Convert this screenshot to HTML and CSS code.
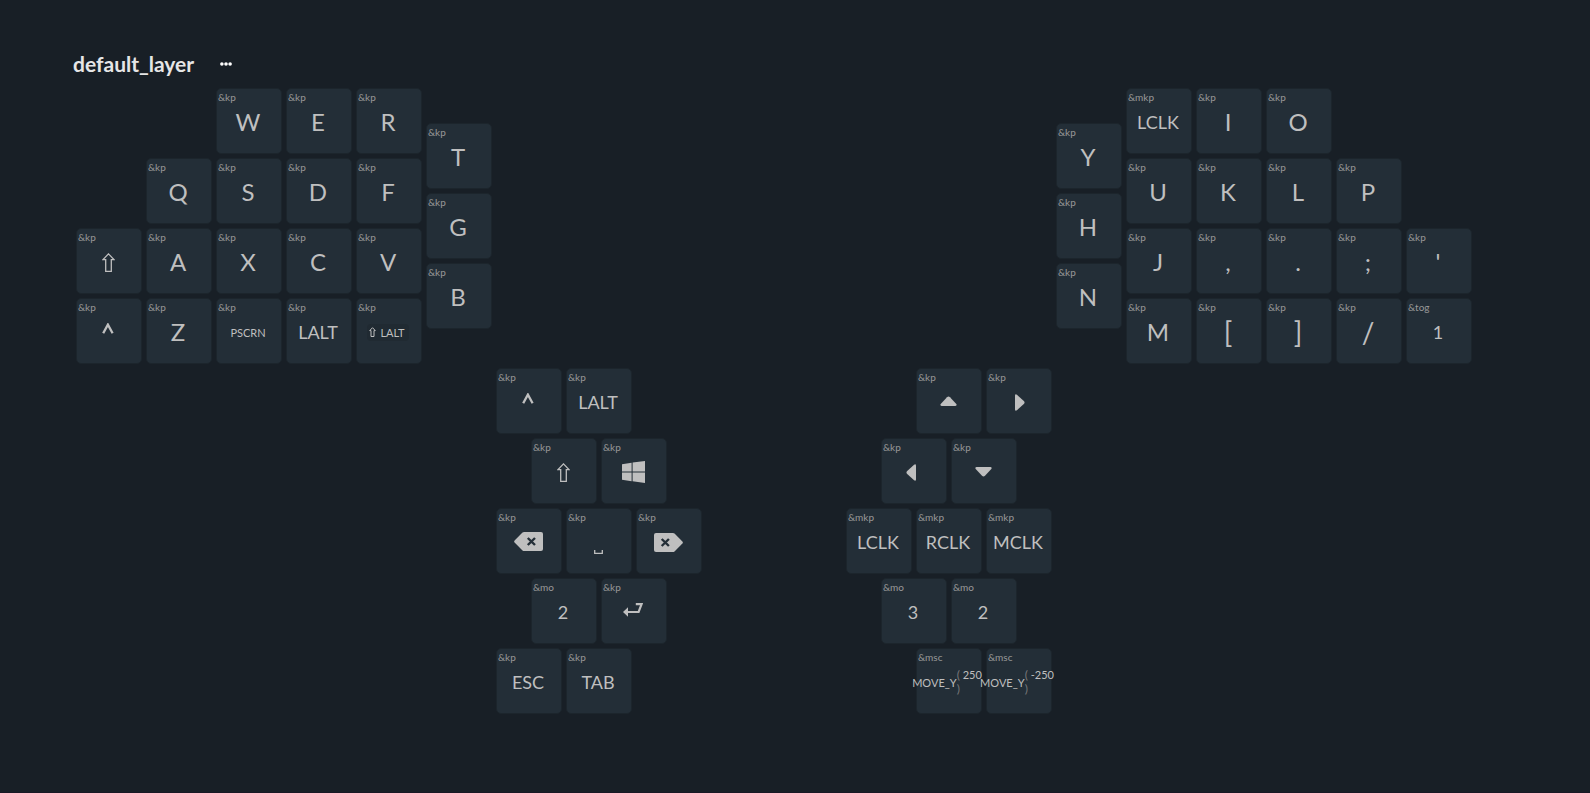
FILE: index.html
```
<!DOCTYPE html>
<html lang="en">
<head>
<meta charset="utf-8">
<title>Keymap</title>
<link rel="stylesheet" href="styles.css">
</head>
<body>
<svg class="defs" aria-hidden="true">
  <symbol id="shift" viewBox="0 0 13 19"><path d="M6.5 .9 12 6.6H9.3V18.3H3.7V6.6H1Z" fill="none" stroke="currentColor" stroke-width="1.300"/></symbol>
  <symbol id="ctrl" viewBox="0 0 12 11"><path d="M1.200 10.200 5.900 1.600 10.600 10.200" fill="none" stroke="currentColor" stroke-width="2.300"/></symbol>
</svg>
<main class="editor">
  <header class="layer">
    <button class="layer-name">default_layer</button>
    <button class="layer-menu" aria-label="Layer options">
      <svg width="12" height="4" viewBox="0 0 12 4" fill="currentColor"><circle cx="1.900" cy="2" r="1.800"/><circle cx="6" cy="2" r="1.800"/><circle cx="10.100" cy="2" r="1.800"/></svg>
    </button>
  </header>
  <section class="keyboard" aria-label="Keys">
    <button class="key x4 y0"><span class="bind">&amp;kp</span>W</button>
    <button class="key x6 y0"><span class="bind">&amp;kp</span>E</button>
    <button class="key x8 y0"><span class="bind">&amp;kp</span>R</button>
    <button class="key x10 y1"><span class="bind">&amp;kp</span>T</button>
    <button class="key x28 y1"><span class="bind">&amp;kp</span>Y</button>
    <button class="key x30 y0 word"><span class="bind">&amp;mkp</span>LCLK</button>
    <button class="key x32 y0"><span class="bind">&amp;kp</span>I</button>
    <button class="key x34 y0"><span class="bind">&amp;kp</span>O</button>

    <button class="key x2 y2"><span class="bind">&amp;kp</span>Q</button>
    <button class="key x4 y2"><span class="bind">&amp;kp</span>S</button>
    <button class="key x6 y2"><span class="bind">&amp;kp</span>D</button>
    <button class="key x8 y2"><span class="bind">&amp;kp</span>F</button>
    <button class="key x10 y3"><span class="bind">&amp;kp</span>G</button>
    <button class="key x28 y3"><span class="bind">&amp;kp</span>H</button>
    <button class="key x30 y2"><span class="bind">&amp;kp</span>U</button>
    <button class="key x32 y2"><span class="bind">&amp;kp</span>K</button>
    <button class="key x34 y2"><span class="bind">&amp;kp</span>L</button>
    <button class="key x36 y2"><span class="bind">&amp;kp</span>P</button>

    <button class="key x0 y4" aria-label="Shift"><span class="bind">&amp;kp</span><svg width="13" height="19"><use href="#shift"/></svg></button>
    <button class="key x2 y4"><span class="bind">&amp;kp</span>A</button>
    <button class="key x4 y4"><span class="bind">&amp;kp</span>X</button>
    <button class="key x6 y4"><span class="bind">&amp;kp</span>C</button>
    <button class="key x8 y4"><span class="bind">&amp;kp</span>V</button>
    <button class="key x10 y5"><span class="bind">&amp;kp</span>B</button>
    <button class="key x28 y5"><span class="bind">&amp;kp</span>N</button>
    <button class="key x30 y4"><span class="bind">&amp;kp</span>J</button>
    <button class="key x32 y4"><span class="bind">&amp;kp</span>,</button>
    <button class="key x34 y4"><span class="bind">&amp;kp</span>.</button>
    <button class="key x36 y4"><span class="bind">&amp;kp</span>;</button>
    <button class="key x38 y4"><span class="bind">&amp;kp</span>'</button>

    <button class="key x0 y6 raised" aria-label="Control"><span class="bind">&amp;kp</span><svg width="12" height="11"><use href="#ctrl"/></svg></button>
    <button class="key x2 y6"><span class="bind">&amp;kp</span>Z</button>
    <button class="key x4 y6 small"><span class="bind">&amp;kp</span>PSCRN</button>
    <button class="key x6 y6 word"><span class="bind">&amp;kp</span>LALT</button>
    <button class="key x8 y6 small"><span class="bind">&amp;kp</span><span class="combo"><svg width="7" height="10" viewBox="0 0 7 10"><path d="M3.500.700 6.300 3.600H5V9.500H2V3.600H.700Z" fill="none" stroke="currentColor"/></svg>LALT</span></button>
    <button class="key x30 y6"><span class="bind">&amp;kp</span>M</button>
    <button class="key x32 y6 tall"><span class="bind">&amp;kp</span>[</button>
    <button class="key x34 y6 tall"><span class="bind">&amp;kp</span>]</button>
    <button class="key x36 y6 tall"><span class="bind">&amp;kp</span>/</button>
    <button class="key x38 y6 word"><span class="bind">&amp;tog</span>1</button>

    <button class="key x12 y8 raised" aria-label="Control"><span class="bind">&amp;kp</span><svg width="12" height="11"><use href="#ctrl"/></svg></button>
    <button class="key x14 y8 word"><span class="bind">&amp;kp</span>LALT</button>
    <button class="key x24 y8" aria-label="Up"><span class="bind">&amp;kp</span><svg width="17" height="12" viewBox="0 0 17 12"><path d="M1.600 10Q-.3 9.800.7 8.100L7 1.200Q8.500-.3 10 1.200L16.300 8.100Q17.300 9.800 15.400 10Z" fill="currentColor"/></svg></button>
    <button class="key x26 y8" aria-label="Right"><span class="bind">&amp;kp</span><svg width="14" height="17" viewBox="-4 0 14 17"><path d="M0 1.600Q.2-.3 1.900.7L8.800 7Q10.300 8.500 8.800 10L1.900 16.300Q.2 17.300 0 15.400Z" fill="currentColor"/></svg></button>

    <button class="key x13 y10" aria-label="Shift"><span class="bind">&amp;kp</span><svg width="13" height="19"><use href="#shift"/></svg></button>
    <button class="key x15 y10" aria-label="Windows"><span class="bind">&amp;kp</span><svg width="23" height="22" viewBox="0 0 23 22"><path d="M0 3.200 9.600 1.800V10.500H0ZM10.600 1.600 23 0V10.500H10.600ZM0 11.500H9.600V20.200L0 18.800ZM10.600 11.500H23V22L10.600 20.300Z" fill="currentColor"/></svg></button>
    <button class="key x23 y10" aria-label="Left"><span class="bind">&amp;kp</span><svg width="14" height="17" viewBox="0 0 14 17"><path d="M10 1.600Q9.800-.3 8.100.7L1.200 7Q-.3 8.500 1.200 10L8.100 16.300Q9.800 17.300 10 15.400Z" fill="currentColor"/></svg></button>
    <button class="key x25 y10" aria-label="Down"><span class="bind">&amp;kp</span><svg width="17" height="10" viewBox="0 0 17 10"><path d="M1.600 0Q-.3.2.7 1.900L7 8.800Q8.500 10.300 10 8.800L16.300 1.900Q17.300.2 15.400 0Z" fill="currentColor"/></svg></button>

    <button class="key x12 y12" aria-label="Backspace"><span class="bind">&amp;kp</span><svg width="29" height="21" viewBox="0 0 29 21"><path d="M8.500.6Q9.200 0 10 0H27Q29 0 29 2V17Q29 19 27 19H10Q9.200 19 8.500 18.400L.6 10.500Q-.3 9.500.6 8.500Z" fill="currentColor"/><path d="M13.800 6 21 13M21 6 13.800 13" class="cut"/></svg></button>
    <button class="key x14 y12 low" aria-label="Space"><span class="bind">&amp;kp</span><svg width="9" height="4" viewBox="0 0 9 4"><path d="M.7 0V3.400H8.300V0" fill="none" stroke="currentColor" stroke-width="1.300"/></svg></button>
    <button class="key x16 y12" aria-label="Delete"><span class="bind">&amp;kp</span><svg width="29" height="19" viewBox="0 0 29 19"><path d="M20.500.6Q19.800 0 19 0H2Q0 0 0 2V17Q0 19 2 19H19Q19.800 19 20.500 18.400L28.400 10.500Q29.300 9.500 28.400 8.500Z" fill="currentColor"/><path d="M7.700 6 14.900 13M14.900 6 7.700 13" class="cut"/></svg></button>
    <button class="key x22 y12 word"><span class="bind">&amp;mkp</span>LCLK</button>
    <button class="key x24 y12 word"><span class="bind">&amp;mkp</span>RCLK</button>
    <button class="key x26 y12 word"><span class="bind">&amp;mkp</span>MCLK</button>

    <button class="key x13 y14 word"><span class="bind">&amp;mo</span>2</button>
    <button class="key x15 y14" aria-label="Enter"><span class="bind">&amp;kp</span><svg width="20" height="18" viewBox="0 0 20 18"><path d="M12.800 1.100H18.600L15.600 9H4" fill="none" stroke="currentColor" stroke-width="2.200"/><path d="M0 9 5 4.300V13.700Z" fill="currentColor"/></svg></button>
    <button class="key x23 y14 word"><span class="bind">&amp;mo</span>3</button>
    <button class="key x25 y14 word"><span class="bind">&amp;mo</span>2</button>

    <button class="key x12 y16 word"><span class="bind">&amp;kp</span>ESC</button>
    <button class="key x14 y16 word"><span class="bind">&amp;kp</span>TAB</button>
    <button class="key x24 y16 small"><span class="bind">&amp;msc</span>MOVE_Y<span class="params"><i>(</i> 250<br><i>)</i></span></button>
    <button class="key x26 y16 small"><span class="bind">&amp;msc</span>MOVE_Y<span class="params"><i>(</i> -250<br><i>)</i></span></button>
  </section>
</main>
</body>
</html>
```
FILE: styles.css
```
* { box-sizing: border-box; }

body {
  margin: 0;
  min-height: 100vh;
  background: #181f26;
  border-bottom: 1px solid #181825;
  color: #bfbfbf;
  font-family: Lato, "Open Sans", sans-serif;
}

button {
  padding: 0;
  border: 0;
  background: none;
  color: inherit;
  font: inherit;
  cursor: pointer;
}

.defs { display: none; }

.editor { padding: 52px 76px 40px; }

.layer {
  display: flex;
  align-items: center;
  gap: 26px;
  height: 24px;
  margin: 0 0 12px -3px;
}

.layer-name {
  color: #e6e6e6;
  font-size: 21px;
  font-weight: 700;
  line-height: 24px;
}

.layer-menu { display: flex; color: #fff; }

/* Half-key tracks: every key spans two columns and two rows. */
.keyboard {
  display: grid;
  grid-template-columns: repeat(40, 31px);
  grid-template-rows: repeat(18, 31px);
  gap: 4px;
}

.key {
  position: relative;
  display: flex;
  align-items: center;
  justify-content: center;
  padding: 2px 2px 0 0;
  border: 1px solid #1c252c;
  border-radius: 5px;
  background: #232e37;
  font-size: 24px;
  line-height: 1;
  white-space: nowrap;
}

.key svg { flex: none; }
.key.word { font-size: 18px; }
.key.small { font-size: 11px; }
.key.tall { font-size: 28px; }
.key.raised { padding: 0 2px 6px 0; }
.key.low { padding-top: 22px; }

.bind {
  position: absolute;
  top: 2px;
  left: 1px;
  color: #999;
  font-size: 10px;
  line-height: 12px;
}

.cut {
  fill: none;
  stroke: #232e37;
  stroke-width: 2.400;
}

.combo {
  display: flex;
  align-items: center;
  gap: 4px;
  padding: 3px 4px 3px 2px;
  border-radius: 4px;
  background: #202a32;
}

.params {
  margin-right: 2px;
  line-height: 14px;
  text-align: left;
}

.params i {
  color: #777;
  font-size: 12px;
  font-style: normal;
}

.x0 { grid-column: 1 / span 2; }
.x2 { grid-column: 3 / span 2; }
.x4 { grid-column: 5 / span 2; }
.x6 { grid-column: 7 / span 2; }
.x8 { grid-column: 9 / span 2; }
.x10 { grid-column: 11 / span 2; }
.x12 { grid-column: 13 / span 2; }
.x13 { grid-column: 14 / span 2; }
.x14 { grid-column: 15 / span 2; }
.x15 { grid-column: 16 / span 2; }
.x16 { grid-column: 17 / span 2; }
.x22 { grid-column: 23 / span 2; }
.x23 { grid-column: 24 / span 2; }
.x24 { grid-column: 25 / span 2; }
.x25 { grid-column: 26 / span 2; }
.x26 { grid-column: 27 / span 2; }
.x28 { grid-column: 29 / span 2; }
.x30 { grid-column: 31 / span 2; }
.x32 { grid-column: 33 / span 2; }
.x34 { grid-column: 35 / span 2; }
.x36 { grid-column: 37 / span 2; }
.x38 { grid-column: 39 / span 2; }

.y0 { grid-row: 1 / span 2; }
.y1 { grid-row: 2 / span 2; }
.y2 { grid-row: 3 / span 2; }
.y3 { grid-row: 4 / span 2; }
.y4 { grid-row: 5 / span 2; }
.y5 { grid-row: 6 / span 2; }
.y6 { grid-row: 7 / span 2; }
.y8 { grid-row: 9 / span 2; }
.y10 { grid-row: 11 / span 2; }
.y12 { grid-row: 13 / span 2; }
.y14 { grid-row: 15 / span 2; }
.y16 { grid-row: 17 / span 2; }
```
